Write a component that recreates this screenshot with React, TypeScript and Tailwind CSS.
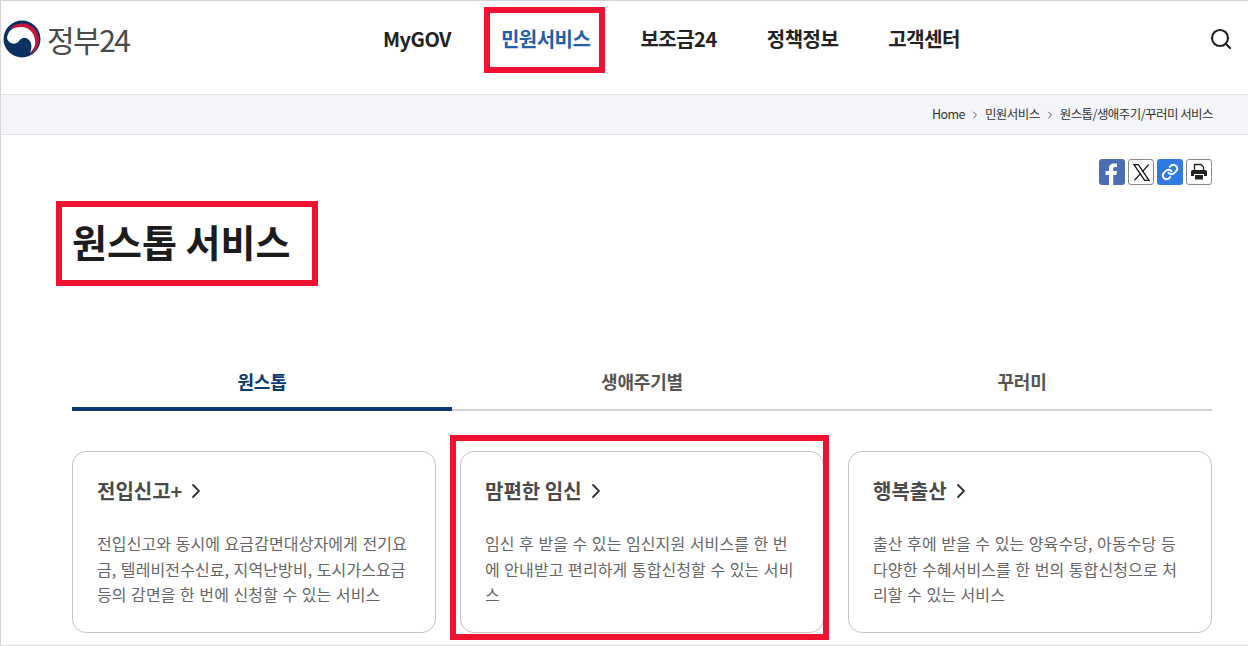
import { ChevronRight, Search } from 'lucide-react'

const font = { fontFamily: '"Noto Sans CJK KR", "Noto Sans", sans-serif' }

const navItems = ['MyGOV', '민원서비스', '보조금24', '정책정보', '고객센터']

const tabs = ['원스톱', '생애주기별', '꾸러미']

const cards = [
  {
    title: '전입신고+',
    lines: ['전입신고와 동시에 요금감면대상자에게 전기요', '금, 텔레비전수신료, 지역난방비, 도시가스요금', '등의 감면을 한 번에 신청할 수 있는 서비스'],
  },
  {
    title: '맘편한 임신',
    lines: ['임신 후 받을 수 있는 임신지원 서비스를 한 번', '에 안내받고 편리하게 통합신청할 수 있는 서비', '스'],
  },
  {
    title: '행복출산',
    lines: ['출산 후에 받을 수 있는 양육수당, 아동수당 등', '다양한 수혜서비스를 한 번의 통합신청으로 처', '리할 수 있는 서비스'],
  },
]

function Logo() {
  return (
    <div className="flex items-center gap-[6px]">
      <svg width="38" height="38" viewBox="0 0 38 38">
        <circle cx="19" cy="19" r="18.500" fill="#0b3161" />
        <path d="M4 18 C5 9 13 6 19 6 C27 6 33 12 33 20 C33 26 30 30 27 33 C29 28 29 23 26 20 C22 16 18 18 16 21 C13 25 6 25 4 18 Z" fill="#ffffff" />
        <path d="M6 10 C10 5 15 3 19 3.500 C29 3.500 36 11 36 20 C36 26 32 32 27 35 C31 30 33 25 32 20 C31 12 25 7 19 7 C14 7 9 8 6 10 Z" fill="#c4163c" />
      </svg>
      <span className="text-[30px] leading-none tracking-[-1.5px] text-[#4a4a4a]" style={{ ...font, fontWeight: 400 }}>
        정부24
      </span>
    </div>
  )
}

function ShareButtons() {
  return (
    <div className="flex justify-end gap-[3px]">
      <div className="flex h-[26px] w-[26px] items-end justify-center overflow-hidden rounded-[3px] bg-[#4a6fb0]">
        <svg width="22" height="24" viewBox="0 0 20 24" fill="#ffffff">
          <path d="M7 24 V14 H3.500 V10 H7 V7.500 C7 4 9 2.500 12 2.500 C13.500 2.500 14.500 2.600 15 2.700 V6 H13 C11.500 6 11.200 6.800 11.200 8 V10 H15 L14.400 14 H11.200 V24 Z" />
        </svg>
      </div>
      <div className="flex h-[26px] w-[26px] items-center justify-center rounded-[3px] border border-[#8a8a8a] bg-white">
        <svg width="19" height="19" viewBox="0 0 24 24" fill="none" stroke="#111111" strokeWidth="1.600">
          <path d="M2.500 2 H8 L21.500 22 H16 Z" />
          <path d="M21 2 L13.200 10.800 M10.500 13.800 L3 22" />
        </svg>
      </div>
      <div className="flex h-[26px] w-[26px] items-center justify-center rounded-[3px] bg-[#2f7be0]">
        <svg width="18" height="18" viewBox="0 0 24 24" fill="none" stroke="#ffffff" strokeWidth="2.600" strokeLinecap="round" strokeLinejoin="round">
          <path d="M10 13a5 5 0 0 0 7.500.5l3-3a5 5 0 0 0-7-7l-1.700 1.700" />
          <path d="M14 11a5 5 0 0 0-7.500-.5l-3 3a5 5 0 0 0 7 7l1.700-1.700" />
        </svg>
      </div>
      <div className="flex h-[26px] w-[26px] items-center justify-center rounded-[3px] border border-[#8a8a8a] bg-white">
        <svg width="18" height="18" viewBox="0 0 18 18">
          <path d="M4.500 7 V1.500 H11 L13.500 4 V7" fill="none" stroke="#222222" strokeWidth="1.300" />
          <path d="M2.500 7 H15.500 Q17 7 17 8.500 V13 H14 V11 H4 V13 H1 V8.500 Q1 7 2.500 7 Z" fill="#222222" />
          <path d="M5 12 H13 V16.500 H5 Z" fill="#222222" />
        </svg>
      </div>
    </div>
  )
}

export default function App() {
  return (
    <div className="relative h-[646px] w-[1248px] overflow-hidden border-t border-b border-l border-[#d4d4d4] bg-white" style={font}>
      <header className="flex h-[93px] items-center justify-between pr-[15px] pb-[17px] pl-[2px]">
        <Logo />
        <nav className="absolute top-[12px] left-[382px] flex h-[52px] items-center gap-[50px]">
          {navItems.map((item) => (
            <a
              key={item}
              className={`text-[20px] font-bold tracking-[-0.5px] ${item === '민원서비스' ? 'text-[#1f5fae]' : 'text-[#222222]'}`}
            >
              {item}
            </a>
          ))}
        </nav>
        <Search size={24} strokeWidth={2.200} className="text-[#222222]" />
      </header>

      <div className="flex h-[41px] items-center justify-end gap-[4px] border-y border-[#e2e4ea] bg-[#f4f5f9] pr-[35px] text-[12.500px] tracking-[-0.55px] text-[#333333]">
        <span>Home</span>
        <ChevronRight size={12} className="text-[#555555]" />
        <span>민원서비스</span>
        <ChevronRight size={12} className="text-[#555555]" />
        <span>원스톱/생애주기/꾸러미 서비스</span>
      </div>

      <main className="pr-[36px] pl-[71px]">
        <div className="pt-[24px]">
          <ShareButtons />
        </div>
        <h1 className="mt-[30px] text-[38px] leading-[52px] font-bold text-[#1c1c1c]">원스톱 서비스</h1>

        <div className="mt-[84px] flex border-b-[2px] border-[#d2d2d2]">
          {tabs.map((tab, i) => (
            <div
              key={tab}
              className={`-mb-[2px] flex h-[60px] w-[380px] items-start justify-center pt-[17px] text-[18px] font-bold tracking-[-0.2px] ${
                i === 0 ? 'border-b-[4px] border-[#0b3a70] text-[#0b3a70]' : 'text-[#555555]'
              }`}
            >
              {tab}
            </div>
          ))}
        </div>

        <div className="mt-[40px] grid grid-cols-3 gap-[24px]">
          {cards.map((card) => (
            <div key={card.title} className="h-[182px] rounded-[14px] border border-[#c4c4c4] px-[24px] pt-[24px]">
              <div className="flex items-center gap-[2px] text-[20px] font-bold tracking-[0px] text-[#4a4a4a]">
                {card.title}
                <ChevronRight size={24} strokeWidth={1.800} className="text-[#333333]" />
              </div>
              <div className="mt-[25px] text-[16px] leading-[25.500px] tracking-[0.1px] whitespace-nowrap text-[#666666] [word-spacing:0.8px]">
                {card.lines.map((line) => (
                  <p key={line}>{line}</p>
                ))}
              </div>
            </div>
          ))}
        </div>
      </main>

      <div className="absolute top-[6px] left-[483px] h-[66px] w-[121px] border-[6px] border-[#ee1230]" />
      <div className="absolute top-[200px] left-[55px] h-[85px] w-[262px] border-[6px] border-[#ee1230]" />
      <div className="absolute top-[434px] left-[449px] h-[205px] w-[379px] border-[6px] border-[#ee1230]" />
    </div>
  )
}
